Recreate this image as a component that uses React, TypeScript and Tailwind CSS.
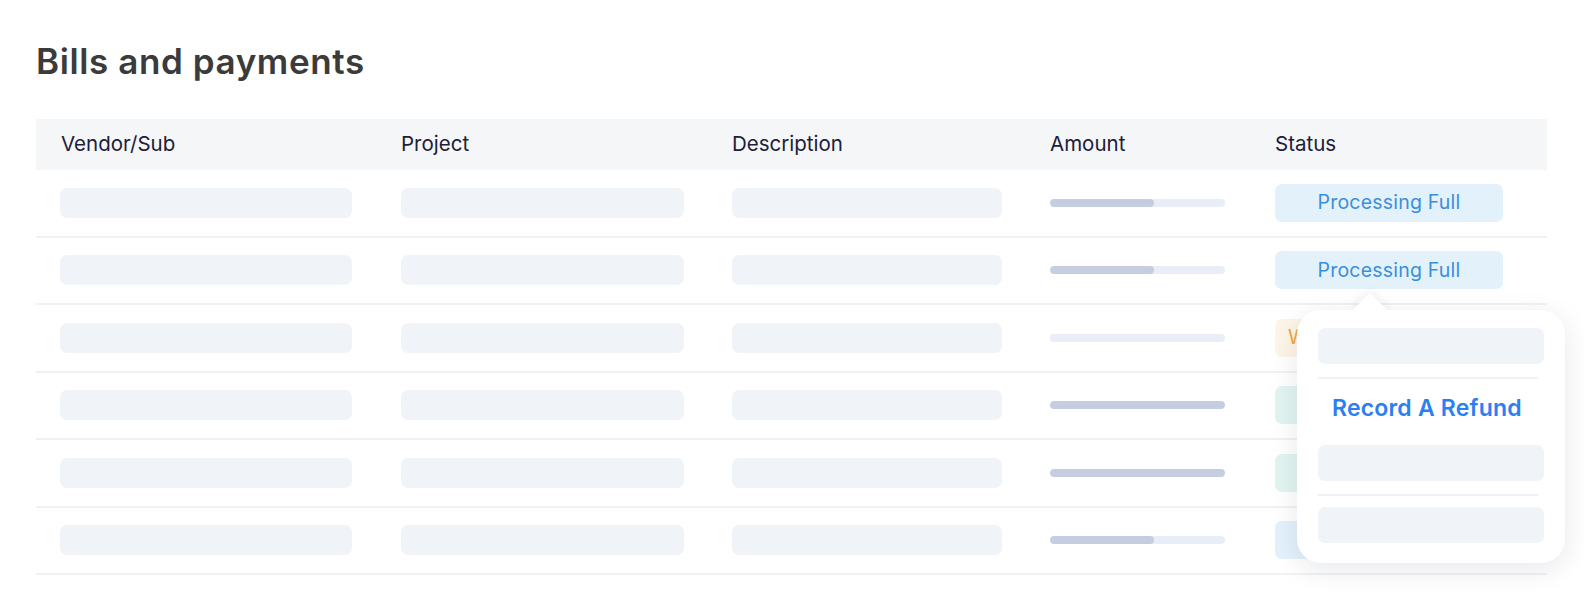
import React from "react";

type Row = { fill: "part" | "none" | "full"; badge: "blue" | "orange" | "green"; text: string };

const rows: Row[] = [
  { fill: "part", badge: "blue", text: "Processing Full" },
  { fill: "part", badge: "blue", text: "Processing Full" },
  { fill: "none", badge: "orange", text: "Waiting Approval" },
  { fill: "full", badge: "green", text: "Paid In Full" },
  { fill: "full", badge: "green", text: "Paid In Full" },
  { fill: "part", badge: "blue", text: "Processing Full" },
];

const fillClass: Record<Row["fill"], string> = {
  part: "w-[104px]",
  none: "w-0",
  full: "w-full",
};

const badgeClass: Record<Row["badge"], string> = {
  blue: "bg-[#e3f1fb] text-[#3a8fdc] justify-center",
  orange: "bg-[#fdf5e7] text-[#f0a43c] justify-start pl-[13px]",
  green: "bg-[#e2f4f0] text-[#3fb39a] justify-center",
};

const Skel = ({ w }: { w: string }) => <div className={`h-[30px] rounded-[7px] bg-[#f0f4f8] ${w}`} />;

export default function App() {
  return (
    <div
      className="min-h-[611px] bg-white px-[36px] pt-[40px]"
      style={{ fontFamily: "Inter, 'Noto Sans', sans-serif" }}
    >
      <h1 className="text-[35px] font-semibold leading-[42px] tracking-[0.6px] text-[#3b3b3b]">Bills and payments</h1>
      <div className="relative mt-[37px] w-[1511px]">
        <div className="grid h-[51px] grid-cols-[365px_331px_318px_225px_1fr] items-center bg-[#f5f6f8] text-[20.5px] text-[#1c2039]">
          <div className="pl-[25px]">Vendor/Sub</div>
          <div>Project</div>
          <div>Description</div>
          <div>Amount</div>
          <div>Status</div>
        </div>
        {rows.map((r, i) => (
          <div
            key={i}
            className="grid h-[67.5px] grid-cols-[365px_331px_318px_225px_1fr] items-center border-b-2 border-[#f0f1f3]"
          >
            <div className="pl-[24px]">
              <Skel w="w-[292px]" />
            </div>
            <div>
              <Skel w="w-[283px]" />
            </div>
            <div>
              <Skel w="w-[270px]" />
            </div>
            <div>
              <div className="h-[8px] w-[175px] overflow-hidden rounded-full bg-[#e8edf7]">
                <div className={`h-full rounded-full bg-[#c5cde1] ${fillClass[r.fill]}`} />
              </div>
            </div>
            <div>
              <div
                className={`flex h-[38px] w-[228px] items-center overflow-hidden whitespace-nowrap rounded-[7px] text-[19.5px] tracking-[0.2px] ${badgeClass[r.badge]}`}
              >
                {r.text}
              </div>
            </div>
          </div>
        ))}

        <div className="absolute left-[1261px] top-[191px] w-[268px] rounded-[24px] bg-white px-[21px] pb-[20px] pt-[18px] shadow-[0_6px_28px_rgba(20,30,60,0.10)]">
          <div className="absolute left-[60px] top-[-12px] h-[26px] w-[26px] rotate-45 rounded-[3px] bg-white shadow-[-3px_-3px_8px_rgba(20,30,60,0.05)]" />
          <div className="absolute left-[40px] top-0 h-[20px] w-[70px] bg-white" />
          <div className="relative">
            <div className="h-[36px] rounded-[7px] bg-[#f0f4f8]" />
            <div className="mr-[6px] mt-[13px] h-[2px] bg-[#f0f1f3]" />
            <div className="flex h-[66px] items-center pb-[7px] pl-[14px] text-[23px] font-semibold tracking-[0.2px] text-[#2b7ff1]">
              Record A Refund
            </div>
            <div className="h-[36px] rounded-[7px] bg-[#f0f4f8]" />
            <div className="mr-[6px] mt-[13px] h-[2px] bg-[#f0f1f3]" />
            <div className="mt-[11px] h-[36px] rounded-[7px] bg-[#f0f4f8]" />
          </div>
        </div>
      </div>
    </div>
  );
}
